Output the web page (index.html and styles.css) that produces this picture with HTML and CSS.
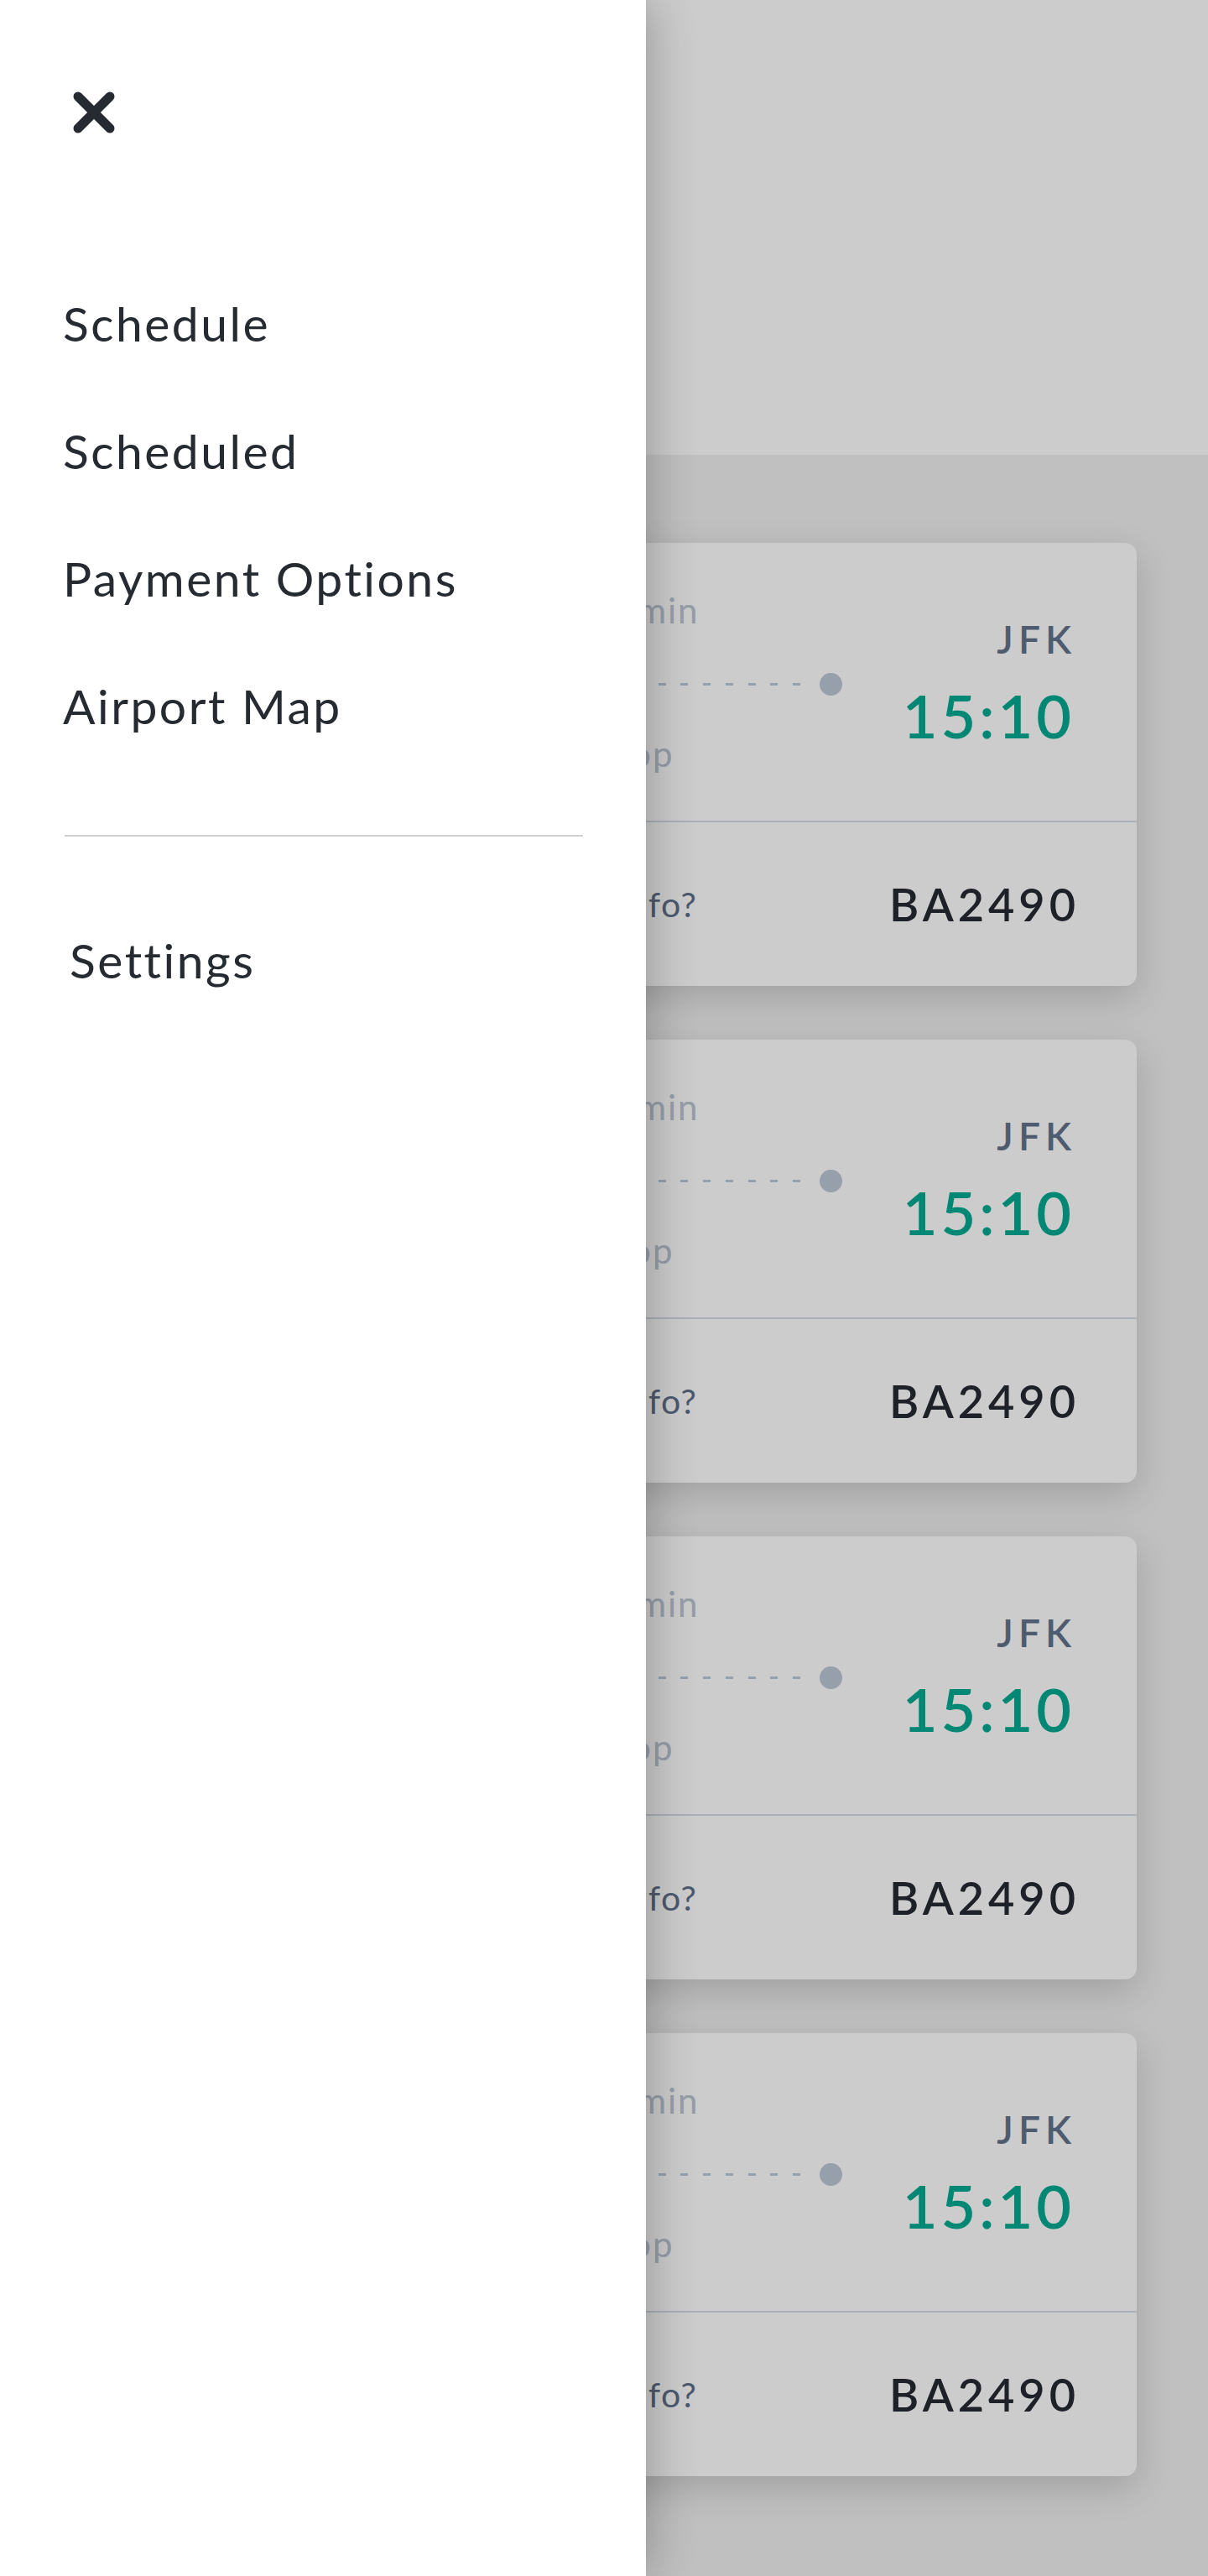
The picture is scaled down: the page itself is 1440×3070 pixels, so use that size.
FILE: index.html
```html
<!DOCTYPE html>
<html lang="en">
<head>
<meta charset="utf-8">
<title>Flights</title>
<link rel="stylesheet" href="styles.css">
</head>
<body>
<div class="app">
  <header class="topbar"></header>
  <main class="list">
    <article class="card">
      <div class="card-top">
        <div class="route">
          <span class="route-label">1h 10min</span>
          <div class="route-line"><span class="dot"></span><span class="dashes"></span><span class="dot"></span></div>
          <span class="route-label">1 Stop</span>
        </div>
        <div class="stop"><span class="code">JFK</span><span class="time">15:10</span></div>
      </div>
      <div class="card-bottom">
        <a class="info">More info?</a>
        <span class="flight">BA2490</span>
      </div>
    </article>
    <article class="card">
      <div class="card-top">
        <div class="route">
          <span class="route-label">1h 10min</span>
          <div class="route-line"><span class="dot"></span><span class="dashes"></span><span class="dot"></span></div>
          <span class="route-label">1 Stop</span>
        </div>
        <div class="stop"><span class="code">JFK</span><span class="time">15:10</span></div>
      </div>
      <div class="card-bottom">
        <a class="info">More info?</a>
        <span class="flight">BA2490</span>
      </div>
    </article>
    <article class="card">
      <div class="card-top">
        <div class="route">
          <span class="route-label">1h 10min</span>
          <div class="route-line"><span class="dot"></span><span class="dashes"></span><span class="dot"></span></div>
          <span class="route-label">1 Stop</span>
        </div>
        <div class="stop"><span class="code">JFK</span><span class="time">15:10</span></div>
      </div>
      <div class="card-bottom">
        <a class="info">More info?</a>
        <span class="flight">BA2490</span>
      </div>
    </article>
    <article class="card">
      <div class="card-top">
        <div class="route">
          <span class="route-label">1h 10min</span>
          <div class="route-line"><span class="dot"></span><span class="dashes"></span><span class="dot"></span></div>
          <span class="route-label">1 Stop</span>
        </div>
        <div class="stop"><span class="code">JFK</span><span class="time">15:10</span></div>
      </div>
      <div class="card-bottom">
        <a class="info">More info?</a>
        <span class="flight">BA2490</span>
      </div>
    </article>
  </main>
</div>

<div class="scrim"></div>

<nav class="drawer">
  <button class="close" aria-label="Close menu">
    <svg width="52" height="52" viewBox="0 0 52 52"><path d="M7 7 L45 45 M45 7 L7 45" stroke="#262a31" stroke-width="11" stroke-linecap="round" fill="none"/></svg>
  </button>
  <ul class="menu">
    <li class="menu-item">Schedule</li>
    <li class="menu-item">Scheduled</li>
    <li class="menu-item">Payment Options</li>
    <li class="menu-item">Airport Map</li>
  </ul>
  <hr class="menu-divider">
  <ul class="menu menu-secondary">
    <li class="menu-item">Settings</li>
  </ul>
</nav>
</body>
</html>
```
FILE: styles.css
```css
* { box-sizing: border-box; }

html, body {
  margin: 0;
  padding: 0;
}

body {
  width: 1440px;
  min-height: 3070px;
  background: #f0f0f0;
  font-family: "Lato", "Noto Sans", sans-serif;
  color: #262a31;
}

.topbar {
  height: 542px;
  background: #ffffff;
}

.list {
  display: flex;
  flex-direction: column;
  gap: 64px;
  padding: 105px 85px 119px;
}

.card {
  height: 528px;
  background: #ffffff;
  border-radius: 14px;
  box-shadow: 0 14px 44px rgba(0, 0, 0, 0.16);
  display: flex;
  flex-direction: column;
}

.card-top {
  height: 333px;
  border-bottom: 2px solid #d4dce6;
  display: grid;
  grid-template-columns: 1fr auto;
  align-items: center;
  padding: 0 78px;
}

.stop {
  display: flex;
  flex-direction: column;
  align-items: flex-end;
  gap: 22px;
}

.code {
  font-size: 46px;
  line-height: 56px;
  font-weight: 600;
  letter-spacing: 6px;
  margin-right: -6px;
  color: #63748c;
}

.time {
  font-size: 72px;
  line-height: 80px;
  font-weight: 600;
  letter-spacing: 4px;
  margin-right: -4px;
  color: #00aa92;
}

.route {
  display: flex;
  flex-direction: column;
  align-items: center;
  margin: 0 72px 0 309px;
}

.route-label {
  font-size: 42px;
  line-height: 50px;
  letter-spacing: 2px;
  color: #bbc5d2;
}

.route-line {
  align-self: stretch;
  display: flex;
  align-items: center;
  margin: 50px 0 44px;
}

.dot {
  width: 27px;
  height: 27px;
  border-radius: 50%;
  background: #bbc8d6;
  flex: none;
}

.dashes {
  flex: 1;
  height: 3px;
  margin: 0 23px;
  background: repeating-linear-gradient(to left, #bbc8d6 0 9px, transparent 9px 26.7px);
}

.card-bottom {
  flex: 1;
  display: flex;
  align-items: center;
  justify-content: space-between;
  padding: 0 68px 0 538px;
}

.info {
  font-size: 41px;
  letter-spacing: 1.5px;
  color: #5f7089;
  cursor: pointer;
}

.flight {
  font-size: 54px;
  font-weight: 600;
  letter-spacing: 5px;
  color: #272a32;
}

.scrim {
  position: fixed;
  inset: 0;
  background: rgba(0, 0, 0, 0.2);
}

.drawer {
  position: fixed;
  top: 0;
  left: 0;
  bottom: 0;
  width: 770px;
  background: #ffffff;
  box-shadow: 0 0 60px rgba(0, 0, 0, 0.3);
  padding: 108px 75px 0 75px;
}

.close {
  display: block;
  width: 52px;
  height: 52px;
  padding: 0;
  margin-left: 11px;
  border: 0;
  background: none;
  cursor: pointer;
}

.close svg { display: block; }

.menu {
  list-style: none;
  margin: 149px 0 0;
  padding: 0;
}

.menu-item {
  font-size: 57px;
  line-height: 68px;
  padding: 42px 0;
  letter-spacing: 2.5px;
  color: #262a31;
}

.menu-divider {
  margin: 78px 0 0 2px;
  width: 618px;
  height: 2px;
  border: 0;
  background: #cfcfd2;
}

.menu-secondary {
  margin: 71px 0 0 8px;
}
```
